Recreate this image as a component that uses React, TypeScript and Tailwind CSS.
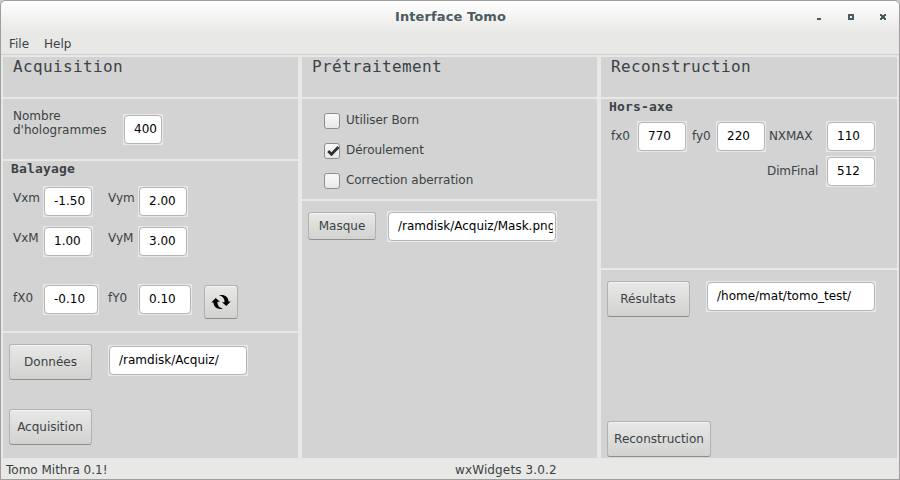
import type { ReactNode } from 'react';

function Field({ value, className = '' }: { value: string; className?: string }) {
  return (
    <div className={`h-[31px] shrink-0 border border-[#e9e9e9] bg-[#e0e0e0] ${className}`}>
      <div className="h-full overflow-hidden whitespace-nowrap rounded-[4px] border border-[#b4b4b4] bg-white pl-[9px] pt-[6px] text-[12px] leading-[14px] text-black">
        <div className="overflow-hidden mr-[2px]">{value}</div>
      </div>
    </div>
  );
}

function Button({ children, className = '' }: { children: ReactNode; className?: string }) {
  return (
    <button
      type="button"
      className={`flex shrink-0 items-center justify-center whitespace-nowrap rounded-[3px] border border-[#b1b1b1] border-b-[#8f8f8f] bg-linear-to-b from-[#e8e8e7] to-[#d2d2d1] text-[12px] leading-[14px] text-[#3b4245] shadow-[inset_0_1px_0_#f5f5f5] ${className}`}
    >
      {children}
    </button>
  );
}

function Label({ children, className = '' }: { children: ReactNode; className?: string }) {
  return <span className={`shrink-0 whitespace-nowrap text-[12px] leading-[14px] ${className}`}>{children}</span>;
}

function Heading({ children }: { children: ReactNode }) {
  return (
    <h2 className="h-10 shrink-0 bg-[#d3d3d3] pl-[10px] font-['DejaVu_Sans_Mono',monospace] text-[16px] leading-[19px] tracking-[0.37px]">
      {children}
    </h2>
  );
}

function Subheading({ children }: { children: ReactNode }) {
  return (
    <h3 className="h-[15px] pl-2 font-['DejaVu_Sans_Mono',monospace] text-[13px] font-bold leading-[15px] tracking-[0.17px]">
      {children}
    </h3>
  );
}

function Check({ label, checked = false }: { label: string; checked?: boolean }) {
  return (
    <div className="flex h-[30px] items-start">
      <span className="mr-[6px] h-4 w-4 rounded-[3px] border border-[#8e8e8e] bg-linear-to-b from-[#fafafa] to-[#e8e8e8]">
        {checked && (
          <svg className="block" width="14" height="14" viewBox="0 0 14 14">
            <path d="M3.2 7.1 L6.5 10.3 L13.5 3" fill="none" stroke="#2b3033" strokeWidth="2.8" />
          </svg>
        )}
      </span>
      <Label className="tracking-[-0.05px]">{label}</Label>
    </div>
  );
}

export default function App() {
  return (
    <div className="h-[480px] w-[900px] bg-[#c9c9c9] font-['DejaVu_Sans',sans-serif] text-[12px] text-[#3b4245]">
      <div className="flex h-full flex-col overflow-hidden rounded-t-[6px] border border-[#9f9d9d] bg-[#e8e8e6]">
        <header className="flex h-[32px] shrink-0 items-start bg-linear-to-b from-white to-[#e8e8e6] pt-2">
          <h1 className="ml-[394px] w-[112px] whitespace-nowrap text-[13px] font-bold leading-[15px] tracking-[0.1px] text-[#4c5b61]">
            Interface Tomo
          </h1>
          <svg className="ml-[308px] block" width="76" height="14" viewBox="0 0 76 14" shapeRendering="crispEdges">
            <rect x="2" y="9" width="4" height="2" fill="#4c5b61" />
            <path d="M33 5h6v6h-6z M35 7v2h2v-2z" fill="#4c5b61" fillRule="evenodd" />
            <path d="M65 5h2v1h2v-1h2v2h-1v2h1v2h-2v-1h-2v1h-2v-2h1v-2h-1z" fill="#4c5b61" />
          </svg>
        </header>
        <nav className="flex h-[22px] shrink-0 items-start border-b border-[#cfcfcd] pl-2 pt-1">
          <Label className="w-[35px]">File</Label>
          <Label>Help</Label>
        </nav>
        <main className="flex h-[403px] shrink-0 gap-1 pl-[2px] pt-[2px]">
          <section className="flex w-[295px] flex-col gap-[2px]">
            <Heading>Acquisition</Heading>
            <div className="flex h-[60px] items-start bg-[#d3d3d3] pl-[10px] pt-[10px]">
              <Label className="w-[110px]">
                Nombre
                <br />
                d'hologrammes
              </Label>
              <Field value="400" className="mt-[5px] w-10" />
            </div>
            <div className="h-[170px] bg-[#d3d3d3]">
              <Subheading>Balayage</Subheading>
              <div className="mt-[10px] flex h-10 items-start pl-[10px]">
                <Label className="mt-[5px] w-[30px]">Vxm</Label>
                <Field value="-1.50" className="w-[50px]" />
                <Label className="ml-[15px] mt-[5px] w-[30px]">Vym</Label>
                <Field value="2.00" className="w-[50px]" />
              </div>
              <div className="flex h-[58px] items-start pl-[10px]">
                <Label className="mt-[5px] w-[30px]">VxM</Label>
                <Field value="1.00" className="w-[50px]" />
                <Label className="ml-[15px] mt-[5px] w-[30px]">VyM</Label>
                <Field value="3.00" className="w-[50px]" />
              </div>
              <div className="flex items-start pl-[10px]">
                <Label className="mt-[7px] w-[30px]">fX0</Label>
                <Field value="-0.10" className="w-[56px]" />
                <Label className="ml-[9px] mt-[7px] w-[30px]">fY0</Label>
                <Field value="0.10" className="w-[54px]" />
                <Button className="ml-3 mt-px h-[34px] w-[34px]">
                  <svg className="shrink-0" width="20" height="18" viewBox="0 0 20 18">
                    <path
                      d="M8 2.3 C13 .9 17.4 3.6 17.5 8.4 H19.7 L15.3 13.1 L11 9.3 H13.5 C13.8 5.8 11.8 3.2 8 2.3Z"
                      fill="#000"
                    />
                    <path
                      d="M12 15.7 C7 17.1 2.6 14.4 2.5 9.6 H.3 L4.7 4.9 L9 8.7 H6.5 C6.2 12.2 8.2 14.8 12 15.7Z"
                      fill="#000"
                    />
                  </svg>
                </Button>
              </div>
            </div>
            <div className="h-[125px] bg-[#d3d3d3] pl-[6px] pt-[11px]">
              <div className="flex h-[65px] items-start">
                <Button className="h-9 w-[83px]">Données</Button>
                <Field value="/ramdisk/Acquiz/" className="ml-4 mt-px w-[140px]" />
              </div>
              <Button className="h-9 w-[83px] pr-px">Acquisition</Button>
            </div>
          </section>
          <section className="flex w-[295px] flex-col gap-[2px]">
            <Heading>Prétraitement</Heading>
            <div className="h-[100px] bg-[#d3d3d3] pl-[22px] pt-[14px]">
              <Check label="Utiliser Born" />
              <Check label="Déroulement" checked />
              <Check label="Correction aberration" />
            </div>
            <div className="flex h-[257px] items-start bg-[#d3d3d3] pl-[6px] pt-[10px]">
              <Button className="mt-px h-7 w-[68px]">Masque</Button>
              <Field value="/ramdisk/Acquiz/Mask.png" className="ml-[11px] w-[170px]" />
            </div>
          </section>
          <section className="flex w-[296px] flex-col gap-[2px]">
            <Heading>Reconstruction</Heading>
            <div className="h-[169px] bg-[#d3d3d3]">
              <Subheading>Hors-axe</Subheading>
              <div className="mt-[7px] flex h-[35px] items-start pl-[10px]">
                <Label className="mt-2 w-[26px]">fx0</Label>
                <Field value="770" className="w-[50px]" />
                <Label className="ml-[5px] mt-2 w-6">fy0</Label>
                <Field value="220" className="w-[50px]" />
                <Label className="ml-[3px] mt-2 w-[57px] tracking-[-0.15px]">NXMAX</Label>
                <Field value="110" className="w-[50px]" />
              </div>
              <div className="flex items-start pl-[166px]">
                <Label className="mt-2 w-[59px] tracking-[-0.1px]">DimFinal</Label>
                <Field value="512" className="w-[50px]" />
              </div>
            </div>
            <div className="h-[188px] bg-[#d3d3d3] pl-[6px] pt-[11px]">
              <div className="flex h-[140px] items-start">
                <Button className="h-9 w-[83px] pr-px">Résultats</Button>
                <Field value="/home/mat/tomo_test/" className="ml-4 w-[170px]" />
              </div>
              <Button className="h-9 w-[104px]">Reconstruction</Button>
            </div>
          </section>
        </main>
        <footer className="flex grow items-start pl-[5px] pt-[5px]">
          <Label className="w-[449px]">Tomo Mithra 0.1!</Label>
          <Label className="tracking-[0.13px]">wxWidgets 3.0.2</Label>
        </footer>
      </div>
    </div>
  );
}
